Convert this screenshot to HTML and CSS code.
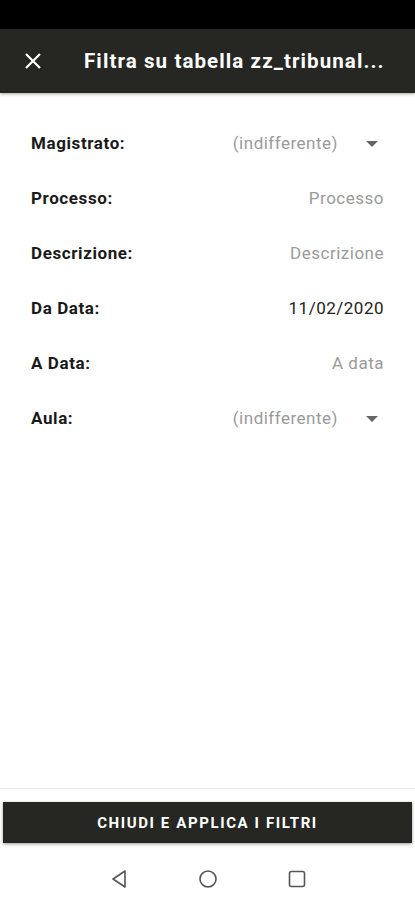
FILE: index.html
```html
<!DOCTYPE html>
<html>
<head>
  <meta charset="utf-8">
  <title>Filtra su tabella</title>
  <link rel="stylesheet" href="styles.css">
</head>
<body>
  <div class="statusbar"></div>
  <header class="toolbar">
    <svg class="close" width="18" height="18" viewBox="0 0 18 18">
      <path d="M2 2L16 16M16 2L2 16" stroke="#fff" stroke-width="2.2" fill="none"/>
    </svg>
    <h1 class="title">Filtra su tabella zz_tribunal...</h1>
  </header>

  <main class="form">
    <div class="row">
      <span class="label">Magistrato:</span>
      <span class="value hint">(indifferente)</span>
      <span class="caret"></span>
    </div>
    <div class="row">
      <span class="label">Processo:</span>
      <span class="value hint">Processo</span>
    </div>
    <div class="row">
      <span class="label">Descrizione:</span>
      <span class="value hint">Descrizione</span>
    </div>
    <div class="row">
      <span class="label">Da Data:</span>
      <span class="value">11/02/2020</span>
    </div>
    <div class="row">
      <span class="label">A Data:</span>
      <span class="value hint">A data</span>
    </div>
    <div class="row">
      <span class="label">Aula:</span>
      <span class="value hint">(indifferente)</span>
      <span class="caret"></span>
    </div>
  </main>

  <footer class="footer">
    <button class="apply">CHIUDI E APPLICA I FILTRI</button>
  </footer>

  <nav class="navbar">
    <svg width="18" height="20" viewBox="0 0 18 20">
      <path d="M15 2L3 10L15 18Z" stroke="#555" stroke-width="1.6" fill="none" stroke-linejoin="round"/>
    </svg>
    <svg width="20" height="20" viewBox="0 0 20 20">
      <circle cx="10" cy="10" r="8" stroke="#555" stroke-width="1.6" fill="none"/>
    </svg>
    <svg width="18" height="18" viewBox="0 0 18 18">
      <rect x="1.5" y="1.5" width="15" height="15" rx="2" stroke="#555" stroke-width="1.6" fill="none"/>
    </svg>
  </nav>
</body>
</html>
```

FILE: styles.css
```css
html, body { margin: 0; padding: 0; background: #fff; }
body {
  width: 415px;
  height: 900px;
  display: flex;
  flex-direction: column;
  font-family: Roboto, "Liberation Sans", sans-serif;
}

.statusbar { height: 29px; background: #000; }

.toolbar {
  height: 64px;
  background: #262723;
  display: flex;
  align-items: center;
  box-shadow: 0 1px 3px rgba(0,0,0,0.35);
  position: relative;
  z-index: 1;
}
.toolbar .close { margin-left: 24px; }
.title {
  margin: 0 0 0 42px;
  font-size: 20.5px;
  font-weight: 700;
  letter-spacing: 1.1px;
  color: #fff;
  white-space: nowrap;
}

.form {
  flex: 1;
  padding: 22px 31px 0 31px;
  display: flex;
  flex-direction: column;
}
.row {
  height: 55px;
  display: flex;
  align-items: center;
}
.label {
  flex: 1;
  font-size: 17px;
  font-weight: 700;
  letter-spacing: 0.6px;
  color: #1a1a1a;
}
.value {
  font-size: 17px;
  letter-spacing: 0.5px;
  color: #222;
}
.hint { color: #9a9a9a; }
.caret {
  width: 0; height: 0;
  margin: 2px 6px 0 28px;
  border-left: 6px solid transparent;
  border-right: 6px solid transparent;
  border-top: 6px solid #666;
}

.footer {
  border-top: 1px solid #ececec;
  padding: 13px 3px 14px 3px;
}
.apply {
  width: 100%;
  height: 41px;
  border: none;
  background: #262723;
  color: #fff;
  font-family: Roboto, "Liberation Sans", sans-serif;
  font-size: 15px;
  font-weight: 700;
  letter-spacing: 1.6px;
  box-shadow: 0 1px 3px rgba(0,0,0,0.4);
}

.navbar {
  height: 43px;
  display: flex;
  align-items: center;
  justify-content: center;
  gap: 70px;
}
```
